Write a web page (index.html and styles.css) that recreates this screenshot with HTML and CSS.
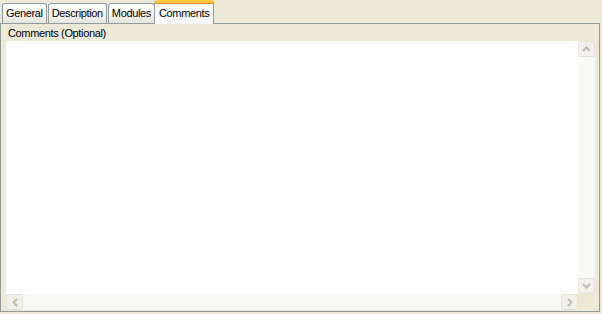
FILE: index.html
```html
<!DOCTYPE html>
<html lang="en">
<head>
  <meta charset="UTF-8">
  <title>Comments</title>
  <link rel="stylesheet" href="styles.css">
</head>
<body>
  <div class="tabs">
    <div class="tab">General</div>
    <div class="tab">Description</div>
    <div class="tab">Modules</div>
    <div class="tab active">Comments</div>
  </div>

  <div class="panel">
    <div class="label">Comments (Optional)</div>
    <div class="editor">
      <div class="editor-main">
        <div class="text"></div>
        <div class="vscroll">
          <div class="sbtn"><svg width="9" height="6" viewBox="0 0 9 6"><path d="M1 5 L4.5 1.5 L8 5" fill="none" stroke="#bfbdb0" stroke-width="2"/></svg></div>
          <div class="strack"></div>
          <div class="sbtn"><svg width="9" height="6" viewBox="0 0 9 6"><path d="M1 1 L4.5 4.5 L8 1" fill="none" stroke="#bfbdb0" stroke-width="2"/></svg></div>
        </div>
      </div>
      <div class="hscroll">
        <div class="sbtn"><svg width="6" height="9" viewBox="0 0 6 9"><path d="M5 1 L1.5 4.5 L5 8" fill="none" stroke="#bfbdb0" stroke-width="2"/></svg></div>
        <div class="strack"></div>
        <div class="sbtn"><svg width="6" height="9" viewBox="0 0 6 9"><path d="M1 1 L4.5 4.5 L1 8" fill="none" stroke="#bfbdb0" stroke-width="2"/></svg></div>
        <div class="corner"></div>
      </div>
    </div>
  </div>
</body>
</html>
```

FILE: styles.css
```css
body { margin: 0; background: #ece9d8; font-family: "Liberation Sans", Arial, sans-serif; font-size: 11px; letter-spacing: -0.35px; color: #000; }

.tabs { display: flex; align-items: flex-end; height: 23px; padding-left: 2px; }
.tab { height: 19px; line-height: 19px; padding: 0 3px; margin-right: 1px; border: 1px solid #919b9c; border-bottom: none; border-radius: 3px 3px 0 0; background: linear-gradient(#ffffff, #f4f3ee 60%, #e6e5dd); }
.tab.active { height: 21px; line-height: 20px; padding: 0 4px; margin: 0 0 -1px -2px; background: #fcfcfe; border-top: 3px solid #ffc83c; box-shadow: inset 0 1px 0 #e68b2c; position: relative; }

.panel { width: 598px; height: 287px; border: 1px solid #919b9c; background: #ece9d8; }
.label { padding: 3px 0 0 7px; height: 13px; line-height: 13px; }
.editor { margin: 1px 0 0 5px; width: 589px; height: 269px; background: #fff; display: flex; flex-direction: column; }
.editor-main { flex: 1; display: flex; }
.text { flex: 1; }

.vscroll { width: 17px; display: flex; flex-direction: column; background: #f8f8f5; }
.hscroll { height: 16px; display: flex; background: #f8f8f5; }
.strack { flex: 1; }
.sbtn { width: 17px; height: 16px; border: 1px solid #e6e4da; border-radius: 2px; background: #f1f0ea; display: flex; align-items: center; justify-content: center; box-sizing: border-box; }
.corner { width: 17px; background: #ece9d8; }
```
